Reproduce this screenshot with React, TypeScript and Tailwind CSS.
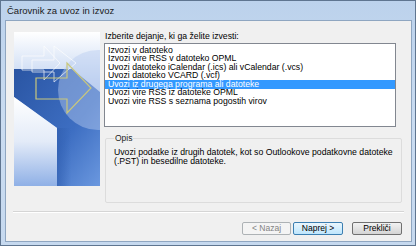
const items = [
  'Izvozi v datoteko',
  'Izvozi vire RSS v datoteko OPML',
  'Uvozi datoteko iCalendar (.ics) ali vCalendar (.vcs)',
  'Uvozi datoteko VCARD (.vcf)',
  'Uvozi iz drugega programa ali datoteke',
  'Uvozi vire RSS iz datoteke OPML',
  'Uvozi vire RSS s seznama pogostih virov',
]

const selected = 4

function WizardArt() {
  return (
    <svg width="86" height="154" viewBox="0 0 86 154" className="block">
      <defs>
        <linearGradient id="bg" x1="0" y1="0" x2="0" y2="1">
          <stop offset="0" stopColor="#ffffff" />
          <stop offset="0.3" stopColor="#c9d9f3" />
          <stop offset="1" stopColor="#6f98dc" />
        </linearGradient>
        <linearGradient id="band" x1="0" y1="0" x2="1" y2="1">
          <stop offset="0" stopColor="#2a55a3" />
          <stop offset="0.6" stopColor="#3d6ec2" />
          <stop offset="1" stopColor="#6b98df" />
        </linearGradient>
        <linearGradient id="low" x1="0" y1="0" x2="0" y2="1">
          <stop offset="0" stopColor="#ffffff" />
          <stop offset="0.5" stopColor="#e3ebf8" />
          <stop offset="1" stopColor="#8fb0e6" />
        </linearGradient>
        <linearGradient id="shade" x1="0" y1="0" x2="1" y2="0">
          <stop offset="0" stopColor="#2f5dae" stopOpacity="0.6" />
          <stop offset="1" stopColor="#2f5dae" stopOpacity="0" />
        </linearGradient>
      </defs>
      <rect width="86" height="154" fill="url(#bg)" />
      <polygon points="0,37 58,37 86,60 86,154 43,154 43,96 0,65" fill="url(#band)" />
      <circle cx="84" cy="58" r="40" fill="#b9cdf0" opacity="0.45" />
      <rect x="43" y="96" width="14" height="58" fill="url(#shade)" />
      <polygon points="0,65 43,96 43,154 0,154" fill="url(#low)" />
      <g fill="none" stroke="#ffffff" strokeWidth="0.8" opacity="0.85">
        <polygon points="8,24 30,24 30,14 46,31 30,48 30,38 8,38" />
        <polygon points="18,28 40,28 40,14 62,31 40,50 40,40 18,40" />
      </g>
      <polygon
        points="22,46 53,46 53,31 77,56 53,81 53,67 22,67"
        fill="none"
        stroke="#c9c77c"
        strokeWidth="1.2"
      />
    </svg>
  )
}

function Button({ label, variant }: { label: string; variant: 'default' | 'primary' | 'disabled' }) {
  const styles = {
    default: 'border-[#707070] bg-gradient-to-b from-[#f2f2f2] to-[#d4d4d4] text-black',
    primary: 'border-[#3c7fb1] bg-gradient-to-b from-[#eaf6fd] to-[#bee6fd] text-black',
    disabled: 'border-[#adb2b5] bg-[#f4f4f4] text-[#838383]',
  }
  return (
    <div
      className={`flex h-[13px] w-[50px] items-center justify-center rounded-[2px] border text-[8.5px] leading-none ${styles[variant]}`}
    >
      {label}
    </div>
  )
}

export default function App() {
  return (
    <div className="flex h-[246px] w-[416px] flex-col border border-[#5f7590] bg-gradient-to-b from-[#bcd2ec] via-[#cadcf1] to-[#c6d9ef] font-['Liberation_Sans',sans-serif] text-[8.7px] text-black">
      <div className="flex h-[19px] items-center pl-[6px] pt-[2px] text-[9.5px] text-[#1a1a1a]">
        Čarovnik za uvoz in izvoz
      </div>
      <div className="ml-[4px] mr-[3px] flex h-[222px] flex-col border border-[#8fa6c1] bg-[#f0f0f0]">
        <div className="flex gap-[4px] pl-[8px] pt-[9px]">
          <div className="mt-[2px] h-[154px] w-[86px] shrink-0 overflow-hidden">
            <WizardArt />
          </div>
          <div className="flex w-[292px] flex-col">
            <div className="flex h-[13px] items-center pl-[1px] leading-none">
              Izberite dejanje, ki ga želite izvesti:
            </div>
            <div className="h-[84px] border border-[#828790] bg-white pt-[2px]">
              {items.map((item, i) => (
                <div
                  key={item}
                  className={`flex h-[8.5px] items-center whitespace-nowrap pl-[3px] leading-none ${
                    i === selected ? 'bg-[#3399ff] text-white' : ''
                  }`}
                >
                  {item}
                </div>
              ))}
            </div>
            <fieldset className="ml-[1px] mt-[7px] h-[69px] w-[290px] rounded-[2px] border border-[#dcdcdc] px-[8px]">
              <legend className="px-[1px] text-[8.5px] leading-[9px] text-[#1e1e1e]">Opis</legend>
              <p className="mt-[5px] whitespace-nowrap leading-[9px]">
                Uvozi podatke iz drugih datotek, kot so Outlookove podatkovne datoteke
                <br />
                (.PST) in besedilne datoteke.
              </p>
            </fieldset>
          </div>
        </div>
        <div className="mx-[7px] mt-[8px] border-t border-b border-t-[#d5d5d5] border-b-white" />
        <div className="mt-[9px] flex pr-[9px] pl-[236px]">
          <Button label="< Nazaj" variant="disabled" />
          <div className="ml-[2px]">
            <Button label="Naprej >" variant="primary" />
          </div>
          <div className="ml-[9px]">
            <Button label="Prekliči" variant="default" />
          </div>
        </div>
      </div>
    </div>
  )
}
